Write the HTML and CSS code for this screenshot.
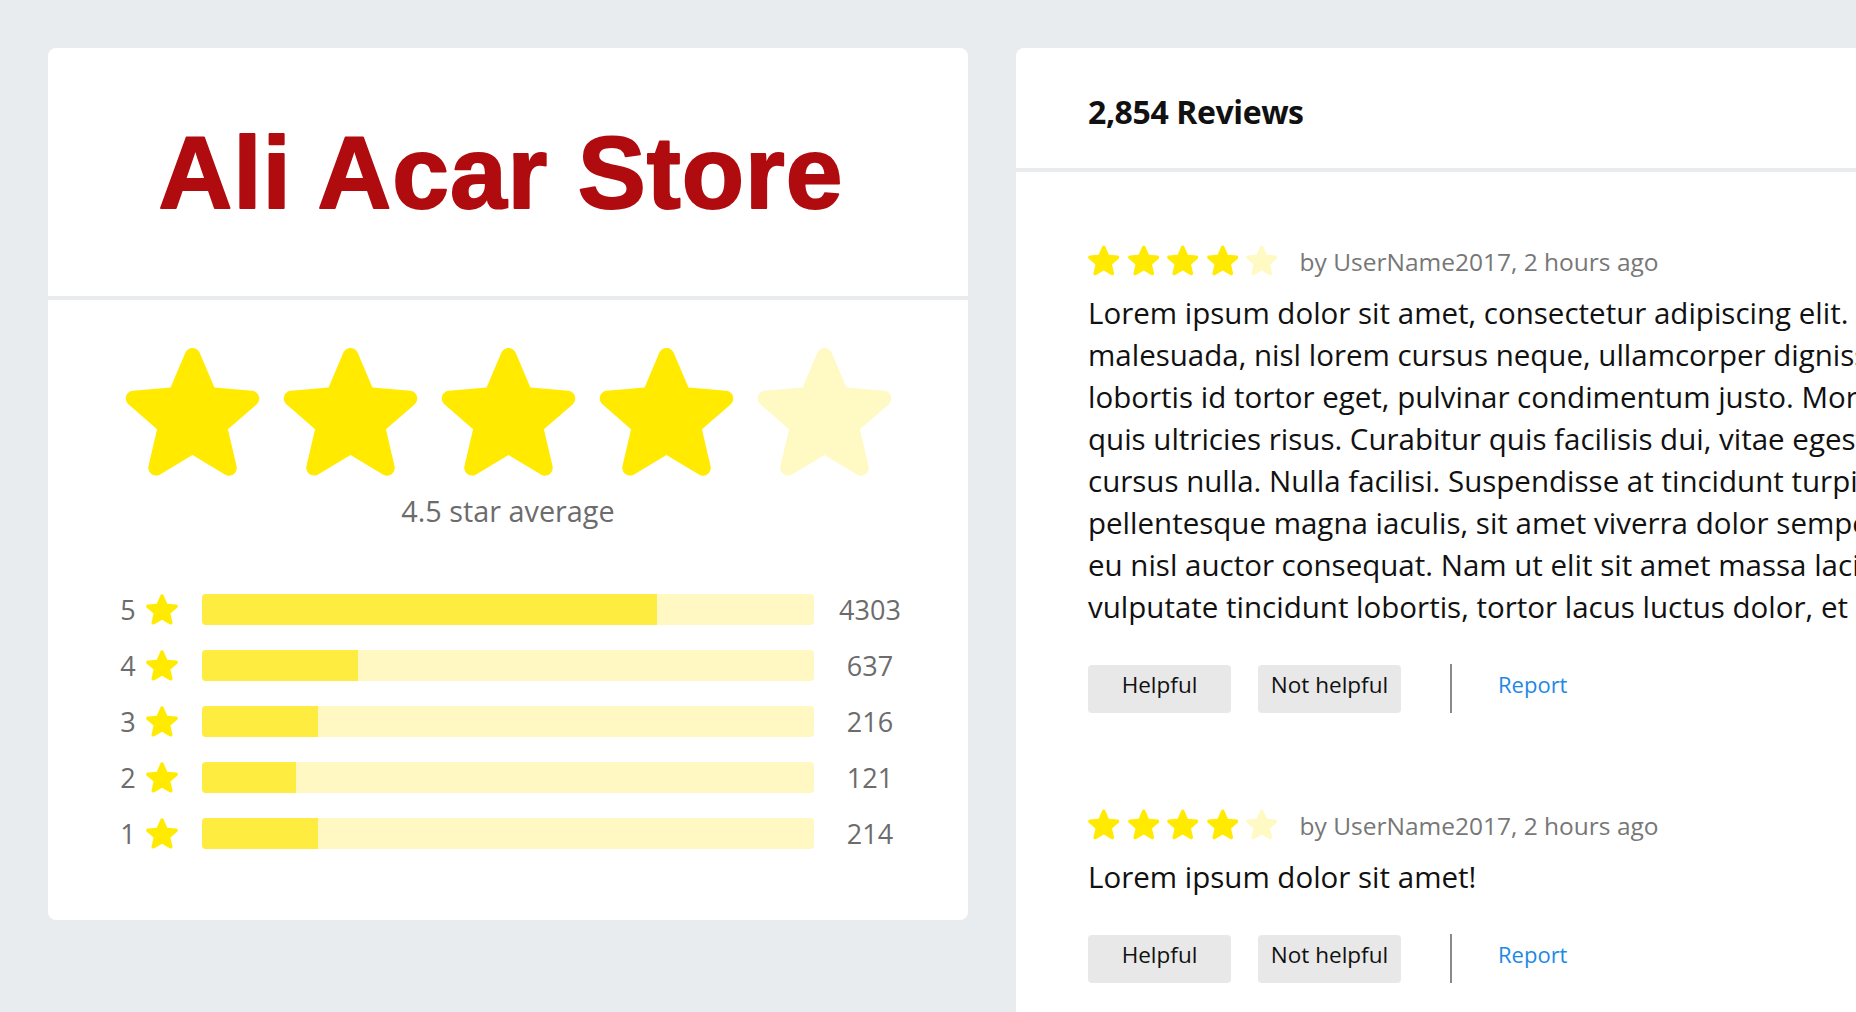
FILE: index.html
```html
<!DOCTYPE html>
<html lang="en">
<head>
<meta charset="utf-8">
<title>Ali Acar Store – Reviews</title>
<link rel="stylesheet" href="styles.css">
</head>
<body>
<svg class="defs" width="0" height="0" aria-hidden="true">
  <defs>
    <symbol id="star" viewBox="3.35 3.57 17.3 16.4">
      <path d="M12 17.27l4.15 2.51c.76.46 1.69-.22 1.49-1.08l-1.1-4.72 3.67-3.18c.67-.58.31-1.68-.57-1.75l-4.83-.41-1.89-4.46c-.34-.81-1.5-.81-1.84 0L9.19 8.63l-4.830.41c-.88.07-1.24 1.17-.57 1.75l3.67 3.18-1.1 4.72c-.2.86.73 1.54 1.49 1.08l4.15-2.5z"/>
    </symbol>
  </defs>
</svg>
<main class="page">
  <section class="card store">
    <header class="store-head">
      <h1 class="store-title">
        <svg class="logo" viewBox="0 0 920 248" width="920" height="248">
          <text class="logo-text" x="453" y="160" text-anchor="middle">Ali Acar Store</text>
        </svg>
      </h1>
    </header>
    <div class="summary">
      <div class="big-stars">
        <svg class="big-star on"><use href="#star"/></svg>
        <svg class="big-star on"><use href="#star"/></svg>
        <svg class="big-star on"><use href="#star"/></svg>
        <svg class="big-star on"><use href="#star"/></svg>
        <svg class="big-star off"><use href="#star"/></svg>
      </div>
      <p class="average">4.5 star average</p>
      <ul class="bars">
        <li class="bar-row"><span class="bar-num">5</span><svg class="bar-star"><use href="#star"/></svg><span class="bar"><span class="bar-fill" style="width:74.3%"></span></span><span class="bar-count">4303</span></li>
        <li class="bar-row"><span class="bar-num">4</span><svg class="bar-star"><use href="#star"/></svg><span class="bar"><span class="bar-fill" style="width:25.5%"></span></span><span class="bar-count">637</span></li>
        <li class="bar-row"><span class="bar-num">3</span><svg class="bar-star"><use href="#star"/></svg><span class="bar"><span class="bar-fill" style="width:18.9%"></span></span><span class="bar-count">216</span></li>
        <li class="bar-row"><span class="bar-num">2</span><svg class="bar-star"><use href="#star"/></svg><span class="bar"><span class="bar-fill" style="width:15.3%"></span></span><span class="bar-count">121</span></li>
        <li class="bar-row"><span class="bar-num">1</span><svg class="bar-star"><use href="#star"/></svg><span class="bar"><span class="bar-fill" style="width:18.9%"></span></span><span class="bar-count">214</span></li>
      </ul>
    </div>
  </section>

  <section class="card reviews">
    <header class="reviews-head">
      <h2 class="reviews-title">2,854 Reviews</h2>
    </header>
    <div class="review-list">
      <article class="review">
        <div class="review-meta">
          <span class="mini-stars">
            <svg class="mini-star on"><use href="#star"/></svg>
            <svg class="mini-star on"><use href="#star"/></svg>
            <svg class="mini-star on"><use href="#star"/></svg>
            <svg class="mini-star on"><use href="#star"/></svg>
            <svg class="mini-star off"><use href="#star"/></svg>
          </span>
          <span class="byline">by UserName2017, 2 hours ago</span>
        </div>
        <p class="review-text">Lorem ipsum dolor sit amet, consectetur adipiscing elit. Ut eget nisi et<br>malesuada, nisl lorem cursus neque, ullamcorper dignissim nunc<br>lobortis id tortor eget, pulvinar condimentum justo. Morbi sed<br>quis ultricies risus. Curabitur quis facilisis dui, vitae egestas<br>cursus nulla. Nulla facilisi. Suspendisse at tincidunt turpis, in<br>pellentesque magna iaculis, sit amet viverra dolor semper nec<br>eu nisl auctor consequat. Nam ut elit sit amet massa lacinia<br>vulputate tincidunt lobortis, tortor lacus luctus dolor, et porta</p>
        <div class="review-actions">
          <button class="vote">Helpful</button>
          <button class="vote">Not helpful</button>
          <span class="divider"></span>
          <a class="report" href="#">Report</a>
        </div>
      </article>
      <article class="review">
        <div class="review-meta">
          <span class="mini-stars">
            <svg class="mini-star on"><use href="#star"/></svg>
            <svg class="mini-star on"><use href="#star"/></svg>
            <svg class="mini-star on"><use href="#star"/></svg>
            <svg class="mini-star on"><use href="#star"/></svg>
            <svg class="mini-star off"><use href="#star"/></svg>
          </span>
          <span class="byline">by UserName2017, 2 hours ago</span>
        </div>
        <p class="review-text">Lorem ipsum dolor sit amet!</p>
        <div class="review-actions">
          <button class="vote">Helpful</button>
          <button class="vote">Not helpful</button>
          <span class="divider"></span>
          <a class="report" href="#">Report</a>
        </div>
      </article>
    </div>
  </section>
</main>
</body>
</html>
```
FILE: styles.css
```css
* { box-sizing: border-box; }

html, body {
  margin: 0;
  height: 100%;
}

body {
  background: #e8ecef;
  font-family: "Open Sans", "Noto Sans", sans-serif;
  color: #111;
  overflow: hidden;
}

.defs { position: absolute; width: 0; height: 0; }

.page {
  display: flex;
  align-items: flex-start;
  gap: 48px;
  padding: 48px 0 0 48px;
}

.card {
  background: #fff;
  border-radius: 8px;
  overflow: hidden;
  flex: none;
}

/* ---------- Store card ---------- */
.store {
  width: 920px;
  height: 872px;
}

.store-head {
  height: 252px;
  border-bottom: 4px solid #e8ecef;
}

.store-title {
  margin: 0;
  line-height: 0;
}

.logo {
  display: block;
}

.logo-text {
  font-family: "Liberation Sans", Arial, sans-serif;
  font-weight: 700;
  font-size: 102px;
  letter-spacing: 1px;
  fill: #b00c10;
  stroke: #b00c10;
  stroke-width: 2px;
  stroke-linejoin: round;
}

.summary {
  padding-top: 48px;
}

.big-stars {
  display: flex;
  justify-content: center;
  gap: 23px;
}

.big-star {
  width: 135px;
  height: 128px;
}

.on { fill: #ffea00; }
.off { fill: #fff9c4; }

.average {
  margin: 15px 0 0;
  text-align: center;
  font-size: 28.8px;
  line-height: 40px;
  color: #6c6c6c;
}

.bars {
  list-style: none;
  margin: 63px 0 0;
  padding: 0 0 0 70px;
  display: flex;
  flex-direction: column;
  gap: 25px;
}

.bar-row {
  display: flex;
  align-items: center;
  height: 31px;
}

.bar-num {
  width: 20px;
  text-align: center;
  font-size: 27px;
  line-height: 31px;
  color: #6c6c6c;
}

.bar-star {
  width: 32px;
  height: 31px;
  margin-left: 8px;
  fill: #ffea00;
}

.bar {
  width: 612px;
  height: 31px;
  margin-left: 24px;
  background: #fff8c2;
  border-radius: 4px;
  overflow: hidden;
  display: flex;
}

.bar-fill {
  height: 100%;
  background: #ffec40;
}

.bar-count {
  width: 112px;
  text-align: center;
  font-size: 27px;
  line-height: 31px;
  color: #6c6c6c;
}

/* ---------- Reviews card ---------- */
.reviews {
  width: 1100px;
  min-height: 1000px;
  border-radius: 8px 0 0 0;
}

.reviews-head {
  height: 124px;
  border-bottom: 4px solid #e8ecef;
  display: flex;
  align-items: center;
  padding: 6px 72px 0;
}

.reviews-title {
  margin: 0;
  font-size: 32px;
  font-weight: 700;
  letter-spacing: -0.4px;
  color: #111;
}

.review-list {
  padding: 73px 72px 0;
  display: flex;
  flex-direction: column;
  gap: 96px;
}

.review-meta {
  display: flex;
  align-items: center;
  height: 31px;
}

.mini-stars {
  display: flex;
  gap: 8px;
}

.mini-star {
  width: 31.5px;
  height: 31px;
}

.byline {
  margin-left: 22px;
  font-size: 24.5px;
  line-height: 31px;
  color: #777;
  position: relative;
  top: 1px;
}

.review-text {
  margin: 16px 0 0;
  font-size: 29.5px;
  line-height: 42px;
  white-space: nowrap;
  color: #111;
}

.review-actions {
  margin-top: 36px;
  display: flex;
  align-items: center;
  height: 49px;
}

.vote {
  width: 143px;
  height: 48px;
  margin-right: 27px;
  border: none;
  border-radius: 4px;
  background: #e8e8e8;
  font-family: inherit;
  font-size: 22.5px;
  color: #111;
  padding: 0 0 9px;
}

.divider {
  width: 2px;
  height: 49px;
  background: #8a8a8a;
  margin-left: 22px;
  margin-right: 46px;
}

.report {
  font-size: 22px;
  color: #1e88e5;
  text-decoration: none;
  padding-bottom: 9px;
}
```
